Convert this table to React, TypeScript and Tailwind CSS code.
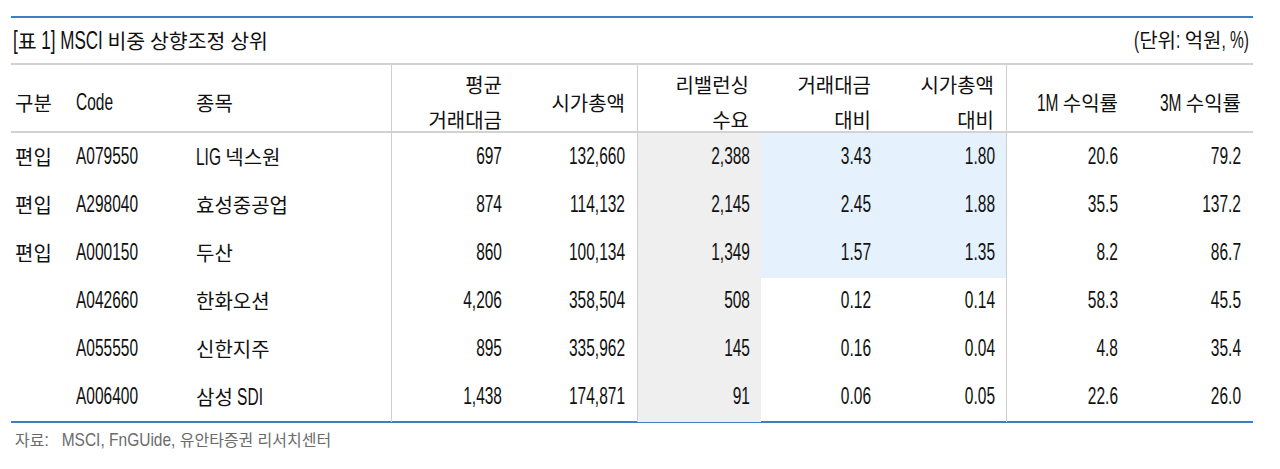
import React from 'react'

interface Row { kind: string; code: string; name: string; avg: string; cap: string; reb: string; vr: string; cr: string; m1: string; m3: string; hi: boolean }

const ROWS: Row[] = [
  { kind: '편입', code: 'A079550', name: 'LIG 넥스원', avg: '697', cap: '132,660', reb: '2,388', vr: '3.43', cr: '1.80', m1: '20.6', m3: '79.2', hi: true },
  { kind: '편입', code: 'A298040', name: '효성중공업', avg: '874', cap: '114,132', reb: '2,145', vr: '2.45', cr: '1.88', m1: '35.5', m3: '137.2', hi: true },
  { kind: '편입', code: 'A000150', name: '두산', avg: '860', cap: '100,134', reb: '1,349', vr: '1.57', cr: '1.35', m1: '8.2', m3: '86.7', hi: true },
  { kind: '', code: 'A042660', name: '한화오션', avg: '4,206', cap: '358,504', reb: '508', vr: '0.12', cr: '0.14', m1: '58.3', m3: '45.5', hi: false },
  { kind: '', code: 'A055550', name: '신한지주', avg: '895', cap: '335,962', reb: '145', vr: '0.16', cr: '0.04', m1: '4.8', m3: '35.4', hi: false },
  { kind: '', code: 'A006400', name: '삼성 SDI', avg: '1,438', cap: '174,871', reb: '91', vr: '0.06', cr: '0.05', m1: '22.6', m3: '26.0', hi: false },
]

// column boundaries: 11,72,192,391,514,637,761,883,1006,1130,1253
const GRID = 'grid grid-cols-[61px_120px_199px_123px_123px_124px_122px_123px_124px_123px]'

// the source font has tall, narrow latin glyphs: latin runs are set smaller and stretched vertically
const SIZES = {
  body: { ko: 'text-[20px]', lat: 'text-[15.5px] scale-y-[1.5]' },
  title: { ko: 'text-[20.5px]', lat: 'text-[17px] scale-y-[1.5]' },
  foot: { ko: 'text-[16px]', lat: 'text-[15.5px] scale-y-[1.2]' },
}

function T({ s, v = 'body' }: { s: string; v?: keyof typeof SIZES }) {
  const z = SIZES[v]
  const parts = s.split(/([가-힣]+)/).filter(Boolean)
  return (
    <>
      {parts.map((p, i) => /[가-힣]/.test(p)
        ? <span key={i} className={z.ko} style={{ fontFamily: "'Noto Sans CJK KR', sans-serif" }}>{p}</span>
        : <span key={i} className={'inline-block whitespace-pre leading-none origin-[50%_85%] ' + z.lat} style={{ fontFamily: "'Liberation Sans', Arial, sans-serif" }}>{p}</span>)}
    </>
  )
}

function H({ children, right, line }: { children: React.ReactNode; right?: boolean; line?: boolean }) {
  return (
    <div className={'flex flex-col justify-center pt-[3px] leading-[33px] ' + (right ? 'items-end pr-3 text-right ' : 'pl-1 ') + (line ? 'border-l border-[#cfcfcf]' : '')}>
      {children}
    </div>
  )
}

export default function App() {
  return (
    <div className="w-[1280px] h-[469px] bg-white text-[#111] pt-4 pl-[11px]" style={{ fontFamily: "'Noto Sans CJK KR', sans-serif" }}>
      <div className="w-[1242px]">
        <div className="h-[2px] bg-[#3f7ec2]" />
        <div className="h-[45px] flex items-center justify-between pl-[2px] pr-[4px] pb-[1px]">
          <span><T v="title" s="[표 1] MSCI 비중 상향조정 상위" /></span>
          <span><T s="(단위: 억원, %)" /></span>
        </div>
        <div className="h-[2px] bg-[#d2d2d2]" />

        {/* header */}
        <div className={GRID + ' h-[66px]'}>
          <H><span><T s="구분" /></span></H>
          <H><span><T s="Code" /></span></H>
          <H><span><T s="종목" /></span></H>
          <H right line><span><T s="평균" /></span><span><T s="거래대금" /></span></H>
          <H right><span><T s="시가총액" /></span></H>
          <H right line><span><T s="리밸런싱" /></span><span><T s="수요" /></span></H>
          <H right><span><T s="거래대금" /></span><span><T s="대비" /></span></H>
          <H right><span><T s="시가총액" /></span><span><T s="대비" /></span></H>
          <H right line><span><T s="1M 수익률" /></span></H>
          <H right><span><T s="3M 수익률" /></span></H>
        </div>
        <div className="h-[2px] bg-[#d2d2d2]" />

        {ROWS.map(r => (
          <div key={r.code} className={GRID + ' h-[48px] leading-[48px]'}>
            <div className="pl-1"><T s={r.kind} /></div>
            <div className="pl-1"><T s={r.code} /></div>
            <div className="pl-1"><T s={r.name} /></div>
            <div className="pr-3 text-right border-l border-[#cfcfcf]"><T s={r.avg} /></div>
            <div className="pr-3 text-right"><T s={r.cap} /></div>
            <div className="pr-[11px] text-right border-l border-[#cfcfcf] bg-[#efefef]"><T s={r.reb} /></div>
            <div className={'pr-3 text-right ' + (r.hi ? 'bg-[#e5f1fc]' : '')}><T s={r.vr} /></div>
            <div className={'pr-[11px] text-right ' + (r.hi ? 'bg-[#e5f1fc]' : '')}><T s={r.cr} /></div>
            <div className="pr-3 text-right border-l border-[#cfcfcf]"><T s={r.m1} /></div>
            <div className="pr-3 text-right"><T s={r.m3} /></div>
          </div>
        ))}

        <div className="h-[2px] bg-[#3f7ec2]" />
        <div className="pt-[3px] pl-1 text-[#6b6b6b] leading-[26px]"><T v="foot" s="자료:   MSCI, FnGUide, 유안타증권 리서치센터" /></div>
      </div>
    </div>
  )
}
